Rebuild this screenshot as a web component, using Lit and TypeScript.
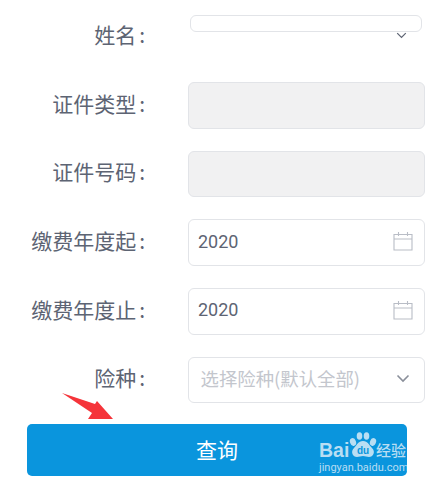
import { LitElement, html, css, svg } from "lit";
import { customElement } from "lit/decorators.js";

const chevron = (cls: string) => html`<svg class=${cls} viewBox="0 0 14 9"><path d="M1.5 1.5 7 7l5.5-5.5" fill="none" stroke="currentColor" stroke-width="1.6"/></svg>`;
const calendar = html`<svg class="cal" viewBox="0 0 20 20"><path d="M1 3.500h18v15.500H1zM1 8h18M5.500 1v4M14.500 1v4" fill="none" stroke="#b9bdc6" stroke-width="1.1"/></svg>`;

@customElement("app-root")
export class AppRoot extends LitElement {
  static styles = css`
    :host { display: block; position: relative; width: 436px; height: 484px; overflow: hidden; background: #fff;
      font-family: "Noto Sans CJK SC", "Noto Sans", sans-serif; color: #5d6473; }
    .form { display: flex; flex-direction: column; gap: 22px; padding: 13px 11px 0 0; }
    .row { display: grid; grid-template-columns: 147px 237px; column-gap: 41px; height: 46.7px; align-items: center; }
    .label { font-size: 21px; line-height: 43px; padding-bottom: 4px; text-align: right; white-space: nowrap; }
    .colon { margin-left: 3px; margin-right: 2px; }
    .field { box-sizing: border-box; height: 46.7px; border: 1px solid #e2e4e8; border-radius: 6px; background: #fff;
      display: flex; align-items: center; justify-content: space-between; padding: 0 11px 3px 9px; font-family: Roboto, sans-serif; font-size: 18px; }
    .disabled { background: #f1f1f2; }
    .name { position: relative; align-self: start; height: 46.7px; }
    .name-box { box-sizing: border-box; height: 17px; margin: 2px 3px 0 2px; border: 1px solid #e2e4e8; border-radius: 6px; }
    .chev-s { position: absolute; right: 18px; top: 19px; width: 11px; height: 7px; color: #5d6473; }
    .chev { width: 14px; height: 9px; color: #8a8f9a; margin-right: 3px; }
    .cal { width: 20px; height: 20px; }
    .ph { font-family: "Noto Sans CJK SC", sans-serif; font-size: 18.4px; color: #c3c6cd; padding-left: 2.500px; white-space: nowrap; }
    .btn { position: relative; overflow: hidden; box-sizing: border-box; margin: 21px 0 0 27px; width: 380px; height: 52px; border-radius: 5px;
      background: #0a95dd; color: #fff; font-size: 21px; display: flex; align-items: center; justify-content: center; padding-bottom: 2px; }
    .wm { position: absolute; left: 292px; top: 5px; width: 88px; height: 46px; color: #b9def3; }
    .wm-logo { position: absolute; left: 0; top: 4px; width: 88px; height: 26px; overflow: visible; }
    .bai { position: absolute; left: 0; top: 9px; font: 700 19.5px/24px "Liberation Sans", sans-serif; }
    .jy { position: absolute; left: 57px; top: 11px; font-size: 15px; line-height: 20px; font-weight: 500; white-space: nowrap; }
    .url { position: absolute; left: 0; top: 32px; font: 11px/14px Roboto, sans-serif; white-space: nowrap; }
    .arrow { position: absolute; left: 60px; top: 392px; width: 56px; height: 32px; }
  `;

  private label(t: string) {
    return html`<div class="label">${t}<span class="colon">:</span></div>`;
  }

  render() {
    return html`
      <div class="form">
        <div class="row">${this.label("姓名")}
          <div class="name"><div class="name-box"></div>${chevron("chev-s")}</div></div>
        <div class="row">${this.label("证件类型")}<div class="field disabled"></div></div>
        <div class="row">${this.label("证件号码")}<div class="field disabled"></div></div>
        <div class="row">${this.label("缴费年度起")}<div class="field">2020 ${calendar}</div></div>
        <div class="row">${this.label("缴费年度止")}<div class="field">2020 ${calendar}</div></div>
        <div class="row">${this.label("险种")}
          <div class="field"><span class="ph">选择险种(默认全部)</span>${chevron("chev")}</div></div>
      </div>
      <div class="btn">查询
        <div class="wm">
          <span class="bai">Bai</span>
          <svg class="wm-logo" viewBox="0 0 88 26">
            ${svg`<g fill="#b9def3" transform="translate(-4 0)">
              <ellipse cx="38" cy="9" rx="3" ry="4" transform="rotate(-20 38 9)"/>
              <ellipse cx="44.500" cy="3" rx="2.800" ry="3.800"/>
              <ellipse cx="51.500" cy="3" rx="2.800" ry="3.800"/>
              <ellipse cx="58" cy="9" rx="3" ry="4" transform="rotate(20 58 9)"/>
              <path d="M48 8c5 0 6 4 9 7 4 4 1 9-3 9-2 0-4-1-6-1s-4 1-6 1c-4 0-7-5-3-9 3-3 4-7 9-7z"/>
              <text x="48" y="21" text-anchor="middle" font-family="Liberation Sans, sans-serif" font-weight="700" font-size="10" fill="#0a95dd">du</text>
            </g>`}
          </svg>
          <span class="jy">经验</span>
          <span class="url">jingyan.baidu.com</span>
        </div>
      </div>
      <svg class="arrow" viewBox="0 0 56 32"><path d="M2 1 35 12l2-3 16 18H28l4-6z" fill="#f5343a"/></svg>
    `;
  }
}
